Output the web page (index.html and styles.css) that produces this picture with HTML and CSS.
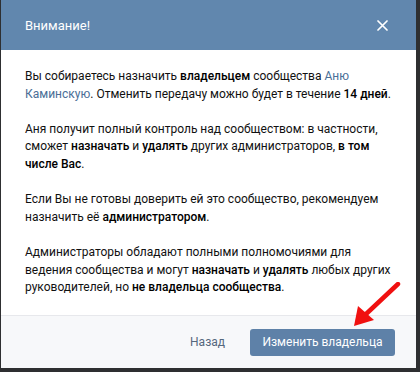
FILE: index.html
```html
<!DOCTYPE html>
<html lang="ru">
<head>
    <meta charset="UTF-8">
    <title>Внимание!</title>
    <link rel="stylesheet" href="styles.css">
</head>
<body>
    <div class="box">
        <div class="box-header">
            <span class="box-title">Внимание!</span>
            <span class="box-close">
                <svg width="11" height="11" viewBox="0 0 11 11"><path d="M1 1L10 10M10 1L1 10" stroke="#fff" stroke-width="1.7" stroke-linecap="round"/></svg>
            </span>
        </div>
        <div class="box-body">
            <p>Вы собираетесь назначить <b>владельцем</b> сообщества <a href="#">Аню Каминскую</a>. Отменить передачу можно будет в течение <b>14 дней</b>.</p>
            <p>Аня получит полный контроль над сообществом: в частности, сможет <b>назначать</b> и <b>удалять</b> других администраторов, <b>в том числе Вас</b>.</p>
            <p>Если Вы не готовы доверить ей это сообщество, рекомендуем назначить её <b>администратором</b>.</p>
            <p>Администраторы обладают полными полномочиями для ведения сообщества и могут <b>назначать</b> и <b>удалять</b> любых других руководителей, но <b>не владельца сообщества</b>.</p>
        </div>
        <div class="box-footer">
            <button class="btn-link">Назад</button>
            <button class="btn">Изменить владельца</button>
        </div>
        <svg class="arrow" width="60" height="60" viewBox="0 0 60 60">
            <path d="M55 2L22 33" stroke="#f01010" stroke-width="4.5" stroke-linecap="round"/>
            <path d="M11 44L15 24L31 38Z" fill="#f01010"/>
        </svg>
    </div>
</body>
</html>
```

FILE: styles.css
```css
body {
    margin: 0;
    background: #2e2f31;
    font-family: Roboto, "Noto Sans", sans-serif;
    font-size: 12px;
    color: #000;
}
.box {
    position: relative;
    width: 415px;
    height: 368px;
    margin-left: 1px;
    background: #fff;
    display: flex;
    flex-direction: column;
}
.box-header {
    height: 50px;
    background: #6187ae;
    display: flex;
    align-items: center;
    justify-content: space-between;
    padding: 0 24px;
}
.box-title {
    color: #fff;
    font-size: 13px;
}
.box-close {
    display: flex;
    margin-right: 4px;
}
.box-body {
    flex: 1;
    padding: 18px 24px 0 24px;
    line-height: 17.6px;
    color: #111;
}
.box-body p {
    margin: 0 0 17.6px;
}
.box-body b {
    font-weight: 500;
    color: #000;
}
.box-body a {
    color: #4a6e96;
    text-decoration: none;
}
.box-footer {
    height: 52px;
    background: #f7f8fa;
    border-top: 1px solid #e7e8ec;
    display: flex;
    align-items: center;
    justify-content: flex-end;
    padding: 0 21px 0 0;
    gap: 25px;
}
.btn-link {
    background: none;
    border: none;
    font-family: inherit;
    font-size: 12px;
    color: #55677d;
    padding: 0;
}
.btn {
    background: #5e81a8;
    color: #fff;
    border: none;
    border-radius: 3px;
    font-family: inherit;
    font-size: 12px;
    height: 27px;
    width: 145px;
    padding: 0;
}
.arrow {
    position: absolute;
    left: 342px;
    top: 282px;
}
```
